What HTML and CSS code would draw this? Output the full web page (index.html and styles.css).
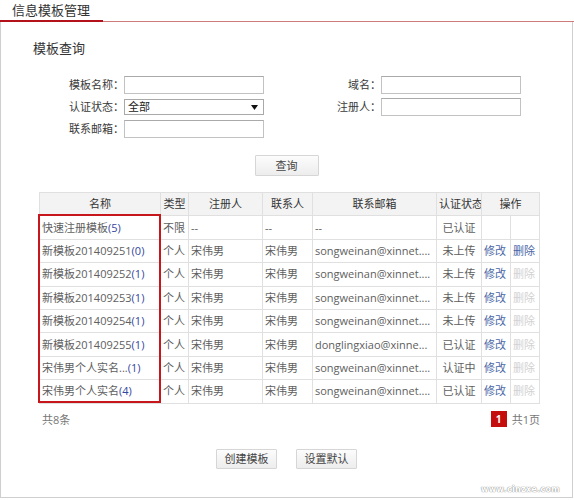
FILE: index.html
```html
<!DOCTYPE html>
<html lang="zh-CN">
<head>
<meta charset="utf-8">
<title>信息模板管理</title>
<link rel="stylesheet" href="styles.css">
</head>
<body>
<div class="header"><span class="title">信息模板管理</span></div>
<div class="panel">
  <h2 class="section-title">模板查询</h2>
  <div class="form">
    <label class="lbl">模板名称：</label><input class="field" type="text">
    <label class="lbl">域名：</label><input class="field" type="text">
    <label class="lbl">认证状态：</label>
    <div class="select"><span>全部</span><svg class="caret" width="7" height="5" viewBox="0 0 7 5"><path d="M0 0H7L3.5 5Z" fill="#111"/></svg></div>
    <label class="lbl">注册人：</label><input class="field" type="text">
    <label class="lbl">联系邮箱：</label><input class="field" type="text">
  </div>
  <div class="query-row"><button class="btn btn-query">查询</button></div>
  <div class="table-wrap">
    <table class="grid">
      <colgroup>
        <col class="c-name"><col class="c-type"><col class="c-reg"><col class="c-contact"><col class="c-mail"><col class="c-status"><col class="c-op"><col class="c-op">
      </colgroup>
      <thead>
        <tr><th>名称</th><th>类型</th><th>注册人</th><th>联系人</th><th>联系邮箱</th><th>认证状态</th><th colspan="2">操作</th></tr>
      </thead>
      <tbody>
        <tr><td>快速注册模板<a class="num">(5)</a></td><td>不限</td><td>--</td><td>--</td><td>--</td><td class="center">已认证</td><td></td><td></td></tr>
        <tr><td>新模板201409251<a class="num">(0)</a></td><td>个人</td><td>宋伟男</td><td>宋伟男</td><td>songweinan@xinnet....</td><td class="center">未上传</td><td><a class="op">修改</a></td><td><a class="op">删除</a></td></tr>
        <tr><td>新模板201409252<a class="num">(1)</a></td><td>个人</td><td>宋伟男</td><td>宋伟男</td><td>songweinan@xinnet....</td><td class="center">未上传</td><td><a class="op">修改</a></td><td><span class="op-off">删除</span></td></tr>
        <tr><td>新模板201409253<a class="num">(1)</a></td><td>个人</td><td>宋伟男</td><td>宋伟男</td><td>songweinan@xinnet....</td><td class="center">未上传</td><td><a class="op">修改</a></td><td><span class="op-off">删除</span></td></tr>
        <tr><td>新模板201409254<a class="num">(1)</a></td><td>个人</td><td>宋伟男</td><td>宋伟男</td><td>songweinan@xinnet....</td><td class="center">未上传</td><td><a class="op">修改</a></td><td><span class="op-off">删除</span></td></tr>
        <tr><td>新模板201409255<a class="num">(1)</a></td><td>个人</td><td>宋伟男</td><td>宋伟男</td><td>donglingxiao@xinne...</td><td class="center">已认证</td><td><a class="op">修改</a></td><td><span class="op-off">删除</span></td></tr>
        <tr><td>宋伟男个人实名...<a class="num">(1)</a></td><td>个人</td><td>宋伟男</td><td>宋伟男</td><td>songweinan@xinnet....</td><td class="center">认证中</td><td><a class="op">修改</a></td><td><span class="op-off">删除</span></td></tr>
        <tr><td>宋伟男个人实名<a class="num">(4)</a></td><td>个人</td><td>宋伟男</td><td>宋伟男</td><td>songweinan@xinnet....</td><td class="center">已认证</td><td><a class="op">修改</a></td><td><span class="op-off">删除</span></td></tr>
      </tbody>
    </table>
    <div class="highlight"></div>
  </div>
  <div class="table-foot">
    <span class="total">共8条</span>
    <div class="pager"><span class="page-cur">1</span><span class="page-total">共1页</span></div>
  </div>
  <div class="actions">
    <button class="btn btn-action">创建模板</button>
    <button class="btn btn-action">设置默认</button>
  </div>
  <div class="watermark">www.cinzxe.com</div>
</div>
</body>
</html>
```

FILE: styles.css
```css
* { box-sizing: border-box; }

body {
  margin: 0;
  font-family: "Open Sans", "Noto Sans CJK SC", sans-serif;
  font-size: 11px;
  color: #606060;
  background: #fff;
}

.header {
  height: 22px;
  border-bottom: 1px solid #cf7b7d;
  display: flex;
  align-items: flex-end;
}

.title {
  height: 22px;
  margin-bottom: -1px;
  padding: 0 13px 0 12px;
  font-family: "Noto Sans CJK SC", sans-serif;
  font-size: 13px;
  line-height: 20px;
  color: #333;
  border-bottom: 2px solid #b3121a;
}

.panel {
  position: relative;
  height: 476px;
  margin-right: 1px;
  border: 1px solid #cfcfcf;
  border-top: none;
  padding-top: 17px;
}

.section-title {
  margin: 0 0 19px 32px;
  font-family: "Noto Sans CJK SC", sans-serif;
  font-size: 13px;
  font-weight: normal;
  line-height: 18px;
  color: #333;
}

.form {
  display: grid;
  grid-template-columns: 123px 140px 117px 140px;
  grid-auto-rows: 18px;
  row-gap: 4px;
  align-items: center;
}

.lbl {
  text-align: right;
  color: #3a3a3a;
  line-height: 18px;
  white-space: nowrap;
}

.field {
  width: 140px;
  height: 18px;
  margin: 0;
  padding: 0 3px;
  border: 1px solid #c2c2c2;
  border-top-color: #aaaaaa;
  background: #fff;
  font: inherit;
}

.select {
  width: 140px;
  height: 16px;
  border: 1px solid #a9a9a9;
  background: #fff;
  display: flex;
  align-items: center;
  justify-content: space-between;
  padding: 0 5px 0 3px;
  color: #222;
  line-height: 14px;
}

.caret { display: block; }

.query-row {
  display: flex;
  justify-content: center;
  margin-top: 17px;
}

.btn {
  margin: 0;
  padding: 0;
  border: 1px solid #d6d6d6;
  border-radius: 1px;
  background: linear-gradient(#fcfcfc, #ededed);
  font: inherit;
  color: #444;
  cursor: pointer;
}

.btn-query {
  width: 64px;
  height: 21px;
  line-height: 19px;
}

.table-wrap {
  position: relative;
  width: 500px;
  margin: 16px 0 0 38px;
}

.grid {
  width: 500px;
  table-layout: fixed;
  border-collapse: collapse;
}

.c-name { width: 121px; }
.c-type { width: 28px; }
.c-reg { width: 74px; }
.c-contact { width: 50px; }
.c-mail { width: 124px; }
.c-status { width: 45px; }
.c-op { width: 29px; }

.grid tr { height: 23.4px; }

.grid th,
.grid td {
  border: 1px solid #e0e0e0;
  padding: 0 2px;
  white-space: nowrap;
  overflow: hidden;
  line-height: 16px;
  text-align: left;
}

.grid th {
  background: #f3f3f3;
  color: #333;
  font-weight: normal;
  text-align: center;
}

.grid td.center { text-align: center; }

.num { color: #3346a0; }

.op { color: #4a67a6; }

.op-off { color: #d2d2d2; }

.highlight {
  position: absolute;
  left: -1px;
  top: 22px;
  width: 123px;
  height: 189px;
  border: 2px solid #c8161d;
  pointer-events: none;
}

.table-foot {
  display: flex;
  justify-content: space-between;
  align-items: center;
  margin: 7px 32px 0 41px;
  height: 16px;
}

.total { color: #777; }

.pager {
  display: flex;
  align-items: center;
  gap: 5px;
}

.page-cur {
  width: 16px;
  height: 16px;
  background: #c40e0e;
  color: #fff;
  font-weight: bold;
  text-align: center;
  line-height: 16px;
  font-size: 10px;
}

.page-total { color: #777; }

.actions {
  display: flex;
  justify-content: center;
  gap: 19px;
  margin-top: 22px;
}

.btn-action {
  width: 61px;
  height: 20px;
  line-height: 18px;
}

.watermark {
  position: absolute;
  right: 12px;
  bottom: 3px;
  font-family: "DejaVu Sans", sans-serif;
  font-size: 8px;
  font-weight: bold;
  color: #fff;
  text-shadow: 0 0 1px #888, 0 0 1px #888;
  letter-spacing: 0.3px;
}
```
